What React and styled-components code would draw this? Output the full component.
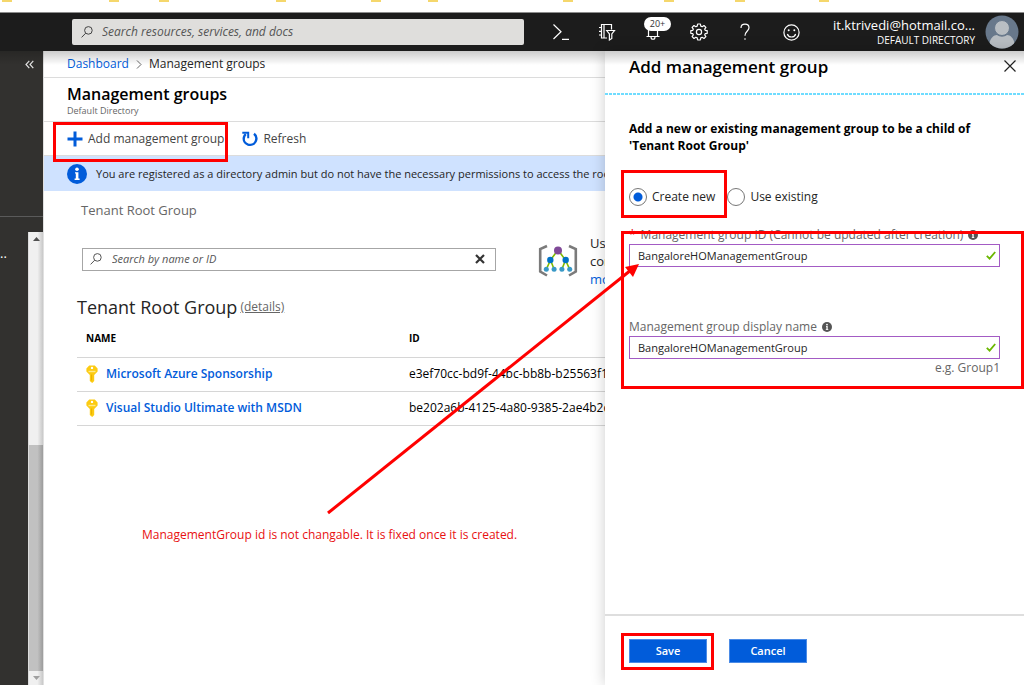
import styled, { createGlobalStyle } from "styled-components";

const FOLDERS = [107, 50, 117, 95, 57, 135, 101, 71, 84, 10];

const SUBSCRIPTIONS = [
  {
    name: "Microsoft Azure Sponsorship",
    id: "e3ef70cc-bd9f-44bc-bb8b-b25563f1a7c2",
  },
  {
    name: "Visual Studio Ultimate with MSDN",
    id: "be202a6b-4125-4a80-9385-2ae4b2d0c915",
  },
];

// Icons
const SearchIcon = () => (
  <svg width="12" height="12" viewBox="0 0 12 12" fill="none" stroke="currentColor">
    <circle cx="7.4" cy="4.4" r="3.8" />
    <path d="M4.7 7.2L0.6 11.4" />
  </svg>
);

const ShellIcon = () => (
  <svg width="18" height="18" viewBox="0 0 18 18" fill="none" stroke="#fff" strokeWidth="1.2">
    <path d="M1.5 1.5L9 8.8L1.5 16M10 16.4H17" />
  </svg>
);

const DirectoryIcon = () => (
  <svg width="18" height="18" viewBox="0 0 18 18" fill="none" stroke="#fff" strokeWidth="1.2">
    <path d="M13.5 6.5V1.5H3.5V15H9M6 1.5V15M1 4.5H4M1 8.3H4M1 12H4" />
    <path d="M8.7 7.5H16.5L13.8 11V15.5L11.4 17V11Z" />
  </svg>
);

const BellIcon = () => (
  <svg width="16" height="18" viewBox="0 0 16 18" fill="none" stroke="#fff" strokeWidth="1.2">
    <path d="M3.5 13.5V6.5C3.5 3.5 5.3 2 8 2S12.5 3.5 12.5 6.5V13.5M1.5 13.5H14.5M6 14C6 17 10 17 10 14" />
  </svg>
);

const GearIcon = () => (
  <svg width="18" height="18" viewBox="0 0 18 18" fill="none" stroke="#fff" strokeWidth="1.2" strokeLinejoin="round">
    <path d="M7.6 1H10.4L10.8 3.1L12.2 3.7L14 2.5L15.9 4.4L14.7 6.2L15.2 7.3L17.2 7.7V10.3L15.2 10.7L14.7 11.8L15.9 13.6L14 15.5L12.2 14.3L10.8 14.9L10.4 17H7.6L7.2 14.9L5.8 14.3L4 15.5L2.1 13.6L3.3 11.8L2.8 10.7L0.8 10.3V7.7L2.8 7.3L3.3 6.2L2.1 4.4L4 2.5L5.8 3.7L7.2 3.1Z" />
    <circle cx="9" cy="9" r="2.6" />
  </svg>
);

const HelpIcon = () => (
  <svg width="12" height="18" viewBox="0 0 12 18" fill="none" stroke="#fff" strokeWidth="1.2">
    <path d="M2 5C2 2.2 3.7 1.2 6 1.2S10 2.6 10 4.8C10 8 6 8.2 6 12.8M6 15.2V16.8" />
  </svg>
);

const SmileIcon = () => (
  <svg width="17" height="17" viewBox="0 0 17 17" fill="none" stroke="#fff" strokeWidth="1.2">
    <circle cx="8.5" cy="8.5" r="7.6" />
    <path d="M4.4 10C5.4 14 11.6 14 12.6 10" />
    <circle cx="5.7" cy="6.2" r="1" fill="#fff" stroke="none" />
    <circle cx="11.3" cy="6.2" r="1" fill="#fff" stroke="none" />
  </svg>
);

const AvatarIcon = () => (
  <svg width="34" height="34" viewBox="0 0 34 34">
    <defs>
      <clipPath id="avatar">
        <circle cx="17" cy="17" r="16.5" />
      </clipPath>
    </defs>
    <g clipPath="url(#avatar)">
      <rect width="34" height="34" fill="#68788b" />
      <circle cx="17" cy="13" r="7.5" fill="#b9bec3" stroke="#68788b" />
      <path d="M4.5 30C4.5 23 9 20 12 20C15 22.3 19 22.3 22 20C25 20 29.5 23 29.5 30V34H4.5Z" fill="#b9bec3" />
    </g>
  </svg>
);

const CollapseIcon = () => (
  <svg width="9" height="9" viewBox="0 0 9 9" fill="none" stroke="#e4e4e4" strokeWidth="1.2">
    <path d="M4.3 0.8L1 4.5L4.3 8.2M8.3 0.8L5 4.5L8.3 8.2" />
  </svg>
);

const ChevronIcon = () => (
  <svg width="6" height="9" viewBox="0 0 6 9" fill="none" stroke="#666">
    <path d="M1 0.5L5 4.5L1 8.5" />
  </svg>
);

const PlusIcon = () => (
  <svg width="16" height="16" viewBox="0 0 16 16" fill="none" stroke="#015cda" strokeWidth="3">
    <path d="M8 0.5V15.5M0.5 8H15.5" />
  </svg>
);

const RefreshIcon = () => (
  <svg width="16" height="16" viewBox="0 0 16 16" fill="none" stroke="#015cda" strokeWidth="2.4">
    <path d="M12 2.8C14.2 4.5 14.9 7.2 13.9 9.9C12.7 13 9.3 14.6 6.1 13.6C2.9 12.5 1.1 9.3 2 6.1C2.3 5 2.9 4 3.8 3.2" />
    <path d="M0.3 1.8H6.2V7.2" strokeWidth="2" />
  </svg>
);

const InfoIcon = ({ size, color }) => (
  <svg width={size} height={size} viewBox="0 0 20 20">
    <circle cx="10" cy="10" r="10" fill={color} />
    <path d="M8 8.2H11.4V14.6H12.6V16H7.6V14.6H8.8V9.6H8Z" fill="#fff" />
    <circle cx="10" cy="5.2" r="1.8" fill="#fff" />
  </svg>
);

const ClearIcon = () => (
  <svg width="10" height="10" viewBox="0 0 10 10" stroke="#333" strokeWidth="2.2">
    <path d="M1 1L9 9M9 1L1 9" />
  </svg>
);

const HierarchyIcon = () => (
  <svg width="40" height="34" viewBox="0 0 40 34" fill="none">
    <path d="M9 2L2.2 5V27.5L9 31.5M31 2L37.8 5V27.5L31 31.5" stroke="#7b7b7b" strokeWidth="2.6" />
    <path d="M20 6L12.5 16L8.5 25M12.5 16L16 25M20 6L27.5 16L24 25M27.5 16L31.5 25" stroke="#7fba00" strokeWidth="1.6" />
    <circle cx="20" cy="6.5" r="4" fill="#804998" />
    <circle cx="12.3" cy="16" r="3.2" fill="#0072c6" />
    <circle cx="27.7" cy="16" r="3.2" fill="#0072c6" />
    <circle cx="8.3" cy="25.2" r="2.5" fill="#3999c6" />
    <circle cx="16.1" cy="25.2" r="2.5" fill="#3999c6" />
    <circle cx="23.9" cy="25.2" r="2.5" fill="#3999c6" />
    <circle cx="31.7" cy="25.2" r="2.5" fill="#3999c6" />
  </svg>
);

const KeyIcon = () => (
  <svg width="12" height="18" viewBox="0 0 12 18">
    <path d="M3.2 0.5H8.8L11.6 3.4V6.6L8.2 10V16L6.2 18L3.8 16V10L0.4 6.6V3.4Z" fill="#fccb12" />
    <path d="M2.5 5.8H9.5V7.2H2.5Z" fill="#ffe98a" />
    <circle cx="6" cy="2.9" r="1.2" fill="#fff" />
    <path d="M5.6 9.5V15.6" stroke="#e8b100" />
  </svg>
);

const CloseIcon = () => (
  <svg width="12" height="12" viewBox="0 0 12 12" stroke="#222" strokeWidth="1.2">
    <path d="M0.5 0.5L11.5 11.5M11.5 0.5L0.5 11.5" />
  </svg>
);

const CheckIcon = () => (
  <svg width="10" height="9" viewBox="0 0 10 9" fill="none" stroke="#6bb700" strokeWidth="1.8">
    <path d="M0.8 4.8L3.6 7.6L9.2 1" />
  </svg>
);

const TriangleIcon = ({ down, color }) => (
  <svg width="7" height="4" viewBox="0 0 7 4" fill={color}>
    <path d={down ? "M0 0H7L3.5 4Z" : "M0 4H7L3.5 0Z"} />
  </svg>
);

function TopBar() {
  return (
    <Header>
      <GlobalSearch>
        <SearchIcon />
        <SearchInput type="text" aria-label="Search" placeholder="Search resources, services, and docs" />
      </GlobalSearch>
      <Tools>
        <ToolButton aria-label="Cloud Shell"><ShellIcon /></ToolButton>
        <ToolButton aria-label="Directory and subscription"><DirectoryIcon /></ToolButton>
        <ToolButton aria-label="Notifications">
          <BellIcon />
          <Badge>20+</Badge>
        </ToolButton>
        <ToolButton aria-label="Settings"><GearIcon /></ToolButton>
        <ToolButton aria-label="Help"><HelpIcon /></ToolButton>
        <ToolButton aria-label="Feedback"><SmileIcon /></ToolButton>
      </Tools>
      <Account aria-label="Account">
        <AccountText>
          <AccountName>it.ktrivedi@hotmail.co...</AccountName>
          <AccountDirectory>DEFAULT DIRECTORY</AccountDirectory>
        </AccountText>
        <AvatarIcon />
      </Account>
    </Header>
  );
}

function SideBar() {
  return (
    <Side>
      <SideTop>
        <PlainButton aria-label="Collapse menu"><CollapseIcon /></PlainButton>
      </SideTop>
      <SideBody>
        <SideLabel>..</SideLabel>
        <ScrollBar>
          <ScrollArrow><TriangleIcon color="#505050" /></ScrollArrow>
          <ScrollSpace />
          <ScrollThumb />
          <ScrollArrow><TriangleIcon down color="#a0a0a0" /></ScrollArrow>
        </ScrollBar>
      </SideBody>
    </Side>
  );
}

function ManagementGroups() {
  return (
    <Main>
      <Breadcrumb>
        <a href="#dashboard">Dashboard</a>
        <ChevronIcon />
        <span>Management groups</span>
      </Breadcrumb>
      <Title>
        <h1>Management groups</h1>
        <p>Default Directory</p>
      </Title>
      <CommandBar>
        <Command>
          <PlusIcon />
          Add management group
          <Highlight $top={0} $right={-4} $bottom={-7} $left={-14} />
        </Command>
        <Command>
          <RefreshIcon />
          Refresh
        </Command>
      </CommandBar>
      <Banner>
        <InfoIcon size={20} color="#015cda" />
        You are registered as a directory admin but do not have the necessary permissions to access the root management group.
      </Banner>
      <Content>
        <ParentName>Tenant Root Group</ParentName>
        <FilterRow>
          <FilterBox>
            <SearchIcon />
            <SearchInput $small type="text" aria-label="Filter" placeholder="Search by name or ID" />
            <PlainButton aria-label="Clear"><ClearIcon /></PlainButton>
          </FilterBox>
          <Hint>
            <HierarchyIcon />
            <p>
              Use management groups<br />
              commonly with policy.<br />
              <a href="#more">more about groups</a>
            </p>
          </Hint>
        </FilterRow>
        <GroupName>
          <h2>Tenant Root Group</h2>
          <a href="#details">(details)</a>
        </GroupName>
        <Table>
          <thead>
            <tr>
              <th>NAME</th>
              <th>ID</th>
            </tr>
          </thead>
          <tbody>
            {SUBSCRIPTIONS.map((item) => (
              <tr key={item.id}>
                <td>
                  <RowLink href="#subscription">
                    <KeyIcon />
                    {item.name}
                  </RowLink>
                </td>
                <td>{item.id}</td>
              </tr>
            ))}
          </tbody>
        </Table>
      </Content>
    </Main>
  );
}

function Field({ id, label, required }) {
  return (
    <div>
      <FieldLabel htmlFor={id}>
        {required && <Required>*</Required>}
        {label}
        <InfoIcon size={10} color="#555" />
      </FieldLabel>
      <FieldBox>
        <input id={id} type="text" defaultValue="BangaloreHOManagementGroup" />
        <CheckIcon />
      </FieldBox>
    </div>
  );
}

function AddPanel() {
  return (
    <Panel>
      <PanelHeader>
        <h2>Add management group</h2>
        <PlainButton aria-label="Close"><CloseIcon /></PlainButton>
      </PanelHeader>
      <PanelBody>
        <Intro>
          Add a new or existing management group to be a child of 'Tenant Root Group'
        </Intro>
        <Radios>
          <Radio>
            <input type="radio" name="mode" defaultChecked />
            Create new
            <Highlight $top={-18} $right={-12} $bottom={-12} $left={-8} />
          </Radio>
          <Radio>
            <input type="radio" name="mode" />
            Use existing
          </Radio>
        </Radios>
        <Fields>
          <Field id="group-id" label="Management group ID (Cannot be updated after creation)" required />
          <Field id="group-name" label="Management group display name" />
          <Highlight $top={5} $right={-24} $bottom={-30} $left={-8} />
        </Fields>
        <Example>e.g. Group1</Example>
      </PanelBody>
      <PanelFooter>
        <ButtonHolder>
          <ActionButton>Save</ActionButton>
          <Highlight $top={-6} $right={-7} $bottom={-8} $left={-8} />
        </ButtonHolder>
        <ActionButton>Cancel</ActionButton>
      </PanelFooter>
    </Panel>
  );
}

function App() {
  return (
    <Page>
      <GlobalStyle />
      <Bookmarks>
        {FOLDERS.map((width, i) => (
          <Folder key={i} $width={width} />
        ))}
      </Bookmarks>
      <TopBar />
      <Workspace>
        <SideBar />
        <ManagementGroups />
        <AddPanel />
      </Workspace>
      <Arrow width="330" height="270" viewBox="0 0 330 270">
        <path d="M2 263L305 20" stroke="#ff0000" strokeWidth="3" />
        <path d="M313 14L307 27L299 17Z" fill="#ff0000" />
      </Arrow>
      <Note>ManagementGroup id is not changable. It is fixed once it is created.</Note>
    </Page>
  );
}

const GlobalStyle = createGlobalStyle`
  * {
    box-sizing: border-box;
  }

  body {
    margin: 0;
    background: #fff;
    color: #252525;
    font-family: "Open Sans", "Noto Sans", sans-serif;
    font-size: 12px;
    line-height: 18px;
  }

  h1, h2, p {
    margin: 0;
  }

  svg {
    display: block;
    flex: none;
  }

  a {
    color: #015cda;
    text-decoration: none;
  }

  button, input {
    font: inherit;
    color: inherit;
  }
`;

const Page = styled.div`
  position: relative;
  display: flex;
  flex-direction: column;
  min-height: 100vh;
  overflow: hidden;
`;

const Bookmarks = styled.div`
  display: flex;
  height: 13px;
  padding-left: 2px;
  border-bottom: 1px solid #8c8c8c;
`;

const Folder = styled.div`
  flex: none;
  width: ${(props) => props.$width}px;

  &::before {
    content: "";
    display: block;
    width: 10px;
    height: 2px;
    background: #f5d76c;
  }
`;

const Header = styled.header`
  display: flex;
  align-items: center;
  height: 38px;
  padding: 0 5px 0 72px;
  background: #1c1c1c;
  color: #fff;
`;

const GlobalSearch = styled.div`
  display: flex;
  flex: 1;
  align-items: center;
  gap: 9px;
  height: 26px;
  padding: 0 9px;
  border-radius: 2px;
  background: #dfdedc;
  color: #444;
`;

const SearchInput = styled.input`
  flex: 1;
  min-width: 0;
  padding: 0;
  border: 0;
  outline: 0;
  background: none;
  font-size: ${(props) => (props.$small ? 11 : 12)}px;

  &::placeholder {
    color: #555;
    font-style: italic;
    opacity: 1;
  }
`;

const PlainButton = styled.button`
  display: flex;
  padding: 0;
  border: 0;
  background: none;
`;

const Tools = styled.div`
  display: flex;
  margin-left: 14px;
`;

const ToolButton = styled(PlainButton)`
  position: relative;
  align-items: center;
  justify-content: center;
  width: 46px;
  height: 38px;
`;

const Badge = styled.span`
  position: absolute;
  top: 4px;
  left: 14px;
  width: 27px;
  border-radius: 7px;
  background: #fff;
  color: #333;
  font-size: 9px;
  line-height: 14px;
  text-align: center;
`;

const Account = styled(PlainButton)`
  align-items: center;
  justify-content: flex-end;
  gap: 10px;
  width: 205px;
`;

const AccountText = styled.span`
  display: flex;
  flex-direction: column;
  text-align: right;
`;

const AccountName = styled.span`
  font-size: 13px;
  line-height: 16px;
`;

const AccountDirectory = styled.span`
  font-size: 10px;
  line-height: 14px;
`;

const Workspace = styled.div`
  display: flex;
  flex: 1;
  position: relative;

  &::after {
    content: "";
    position: absolute;
    top: 0;
    right: 0;
    left: 0;
    height: 14px;
    background: linear-gradient(rgba(0, 0, 0, 0.2), rgba(0, 0, 0, 0));
    pointer-events: none;
  }
`;

const Side = styled.aside`
  display: flex;
  flex-direction: column;
  flex: none;
  width: 43px;
  background: #32312f;
`;

const SideTop = styled.div`
  display: flex;
  justify-content: flex-end;
  height: 166px;
  padding: 9px 9px 0 0;
  border-bottom: 1px solid #5a5a5a;
`;

const SideBody = styled.div`
  display: flex;
  flex: 1;
  justify-content: space-between;
  padding-top: 15px;
`;

const SideLabel = styled.span`
  padding-top: 12px;
  color: #fff;
  font-size: 13px;
`;

const ScrollBar = styled.div`
  display: flex;
  flex-direction: column;
  width: 15px;
  border-left: 1px solid #dcdcdc;
  background: linear-gradient(90deg, #f0f0f0 60%, #c8c8c8);
`;

const ScrollArrow = styled.div`
  display: flex;
  align-items: center;
  justify-content: center;
  height: 14px;
`;

const ScrollSpace = styled.div`
  flex: 200;
`;

const ScrollThumb = styled.div`
  flex: 227;
  background: linear-gradient(90deg, #c1c1c1 60%, #9c9c9c);
`;

const Main = styled.main`
  flex: 1;
  min-width: 0;
  overflow: hidden;
  border-left: 1px solid #e0e0e0;
  white-space: nowrap;
`;

const Breadcrumb = styled.nav`
  display: flex;
  align-items: center;
  gap: 7px;
  height: 27px;
  padding-left: 23px;
  border-bottom: 1px solid #dcdcdc;
`;

const Title = styled.div`
  height: 44px;
  padding: 6px 0 0 23px;
  border-bottom: 1px solid #dcdcdc;

  h1 {
    color: #000;
    font-size: 16px;
    font-weight: 600;
    line-height: 20px;
  }

  p {
    color: #666;
    font-size: 9px;
    line-height: 13px;
  }
`;

const CommandBar = styled.div`
  display: flex;
  gap: 18px;
  height: 34px;
  padding-left: 23px;
  border-bottom: 1px solid #dcdcdc;
`;

const Command = styled(PlainButton)`
  position: relative;
  align-items: center;
  gap: 5px;
  color: #444;
`;

const Highlight = styled.span`
  position: absolute;
  top: ${(props) => props.$top}px;
  right: ${(props) => props.$right}px;
  bottom: ${(props) => props.$bottom}px;
  left: ${(props) => props.$left}px;
  z-index: 1;
  border: 3px solid #ff0000;
  pointer-events: none;
`;

const Banner = styled.div`
  display: flex;
  align-items: center;
  gap: 9px;
  height: 35px;
  padding-left: 23px;
  background: #cfe2ff;
  font-size: 11px;
`;

const Content = styled.div`
  padding: 10px 0 0 33px;
`;

const ParentName = styled.p`
  padding-left: 4px;
  color: #666;
  font-size: 13px;
`;

const FilterRow = styled.div`
  display: flex;
  align-items: center;
  gap: 42px;
  height: 54px;
  margin-top: 15px;
  padding-left: 5px;
`;

const FilterBox = styled.div`
  display: flex;
  flex: none;
  align-items: center;
  gap: 10px;
  width: 414px;
  height: 23px;
  margin-bottom: 4px;
  padding: 0 10px 0 7px;
  border: 1px solid #a6a6a6;
  color: #555;
`;

const Hint = styled.div`
  display: flex;
  align-items: center;
  gap: 12px;
  font-size: 13px;
`;

const GroupName = styled.div`
  display: flex;
  align-items: center;
  gap: 3px;
  margin-top: 7px;

  h2 {
    font-size: 18px;
    font-weight: 400;
    line-height: 24px;
  }

  a {
    color: #666;
    text-decoration: underline;
  }
`;

const Table = styled.table`
  width: 800px;
  border-collapse: collapse;
  table-layout: fixed;
  color: #000;

  th {
    height: 38px;
    padding: 0;
    border-bottom: 1px solid #d6d6d6;
    font-size: 10px;
    font-weight: 700;
    text-align: left;
  }

  th:first-child {
    width: 332px;
    padding-left: 9px;
  }

  td {
    height: 34px;
    padding: 0;
    border-bottom: 1px solid #d6d6d6;
  }
`;

const RowLink = styled.a`
  display: flex;
  align-items: center;
  gap: 8px;
  padding-left: 9px;
  font-weight: 600;
`;

const Panel = styled.section`
  position: relative;
  display: flex;
  flex-direction: column;
  flex: none;
  width: 419px;
  background: #fff;
  box-shadow: 0 0 14px rgba(0, 0, 0, 0.2);
`;

const PanelHeader = styled.div`
  display: flex;
  align-items: flex-start;
  justify-content: space-between;
  height: 44px;
  padding: 4px 8px 0 24px;
  background: repeating-linear-gradient(90deg, #6fdcff 0 3px, #fff 3px 4px) bottom / 100% 2px no-repeat;

  h2 {
    color: #000;
    font-size: 17px;
    font-weight: 600;
    line-height: 24px;
  }

  button {
    padding-top: 5px;
  }
`;

const PanelBody = styled.div`
  flex: 1;
  padding: 25px 24px 0;
`;

const Intro = styled.p`
  color: #000;
  font-weight: 700;
  line-height: 17px;
`;

const Radios = styled.div`
  display: flex;
  gap: 12px;
  margin-top: 34px;
`;

const Radio = styled.label`
  position: relative;
  display: flex;
  align-items: center;
  gap: 5px;

  input {
    appearance: none;
    width: 18px;
    height: 18px;
    margin: 0;
    border: 1px solid #777;
    border-radius: 50%;
    background: #fff;
  }

  input:checked {
    background: radial-gradient(circle, #015cda 4px, #fff 5px);
  }
`;

const Fields = styled.div`
  position: relative;
  display: grid;
  gap: 51px;
  margin-top: 20px;
`;

const FieldLabel = styled.label`
  display: flex;
  align-items: center;
  gap: 5px;
  color: #666;
`;

const Required = styled.span`
  color: #e00000;
`;

const FieldBox = styled.div`
  display: flex;
  align-items: center;
  height: 23px;
  padding: 0 3px 0 8px;
  border: 1px solid #a35bc4;

  input {
    flex: 1;
    min-width: 0;
    padding: 0;
    border: 0;
    outline: 0;
    background: none;
    font-size: 11px;
  }
`;

const Example = styled.p`
  color: #666;
  text-align: right;
`;

const PanelFooter = styled.div`
  display: flex;
  gap: 22px;
  height: 71px;
  padding: 23px 24px;
  border-top: 2px solid #dedede;
`;

const ButtonHolder = styled.div`
  position: relative;
  display: flex;
`;

const ActionButton = styled.button`
  width: 78px;
  height: 24px;
  padding: 0;
  border: 1px solid #4b8be6;
  background: #015cda;
  color: #fff;
  font-size: 11px;
  font-weight: 600;
`;

const Arrow = styled.svg`
  position: absolute;
  top: 250px;
  left: 326px;
  z-index: 2;
  pointer-events: none;
`;

const Note = styled.p`
  position: absolute;
  top: 526px;
  left: 142px;
  z-index: 2;
  color: #e81010;
`;

export default App;
